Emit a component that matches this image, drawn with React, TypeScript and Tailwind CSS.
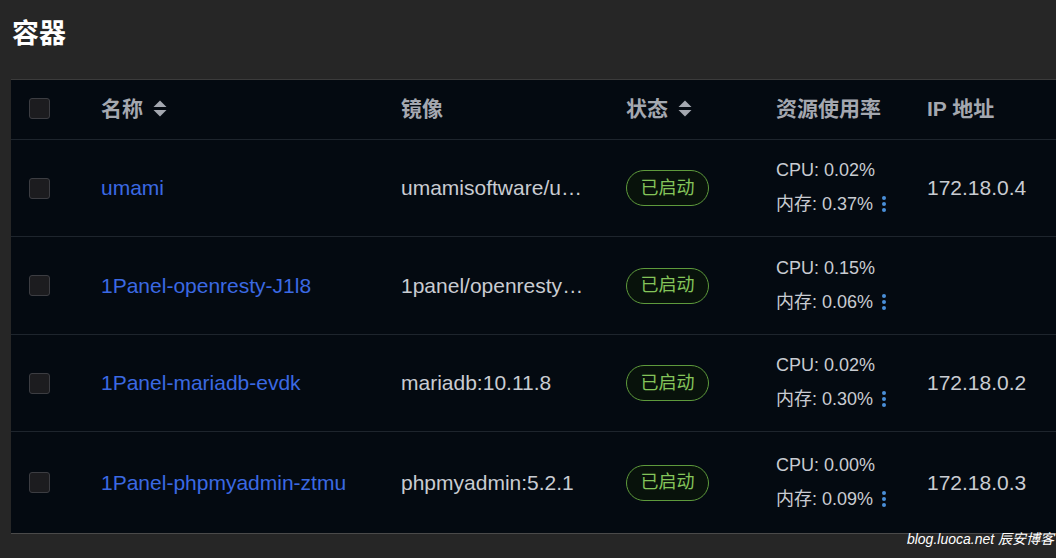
import React from 'react';

const font = '"Liberation Sans","Noto Sans CJK SC",sans-serif';

const rows = [
  { name: 'umami', image: 'umamisoftware/umami:postgresql-latest', cpu: '0.02%', mem: '0.37%', ip: '172.18.0.4', h: 'h-[97px]' },
  { name: '1Panel-openresty-J1l8', image: '1panel/openresty:1.21.4.3-3-1-focal', cpu: '0.15%', mem: '0.06%', ip: '', h: 'h-[98px]' },
  { name: '1Panel-mariadb-evdk', image: 'mariadb:10.11.8', cpu: '0.02%', mem: '0.30%', ip: '172.18.0.2', h: 'h-[97px]' },
  { name: '1Panel-phpmyadmin-ztmu', image: 'phpmyadmin:5.2.1', cpu: '0.00%', mem: '0.09%', ip: '172.18.0.3', h: 'h-[101px]' },
];

const SortIcon = () => (
  <svg width="14" height="17" viewBox="0 0 14 17" className="ml-[10px]" fill="#a4a8b0">
    <path d="M7 0.5 L13.5 7 L0.5 7 Z" />
    <path d="M0.5 10 L13.5 10 L7 16.5 Z" />
  </svg>
);

const MoreIcon = () => (
  <svg width="6" height="18" viewBox="0 0 6 18" className="ml-[8px]" fill="#4a8fd8">
    <circle cx="3" cy="3" r="2" />
    <circle cx="3" cy="9" r="2" />
    <circle cx="3" cy="15" r="2" />
  </svg>
);

const Checkbox = () => (
  <div className="w-[21px] h-[21px] rounded-[3px] border border-[#3c3d42] bg-[#1c1c1f]" />
);

export default function App() {
  return (
    <div className="relative w-[1056px] h-[558px] overflow-hidden bg-[#262626]" style={{ fontFamily: font }}>
      <div className="h-[79px] pl-[12px] pt-[16px]">
        <h1 className="text-[27px] leading-[36px] font-bold text-white">容器</h1>
      </div>

      <div className="ml-[11px] w-[1100px] bg-[#040a11] border-t border-[#3b3b3b] border-b border-b-[#4a4a4a]">
        {/* header */}
        <div className="flex items-center h-[60px] pb-[2px] border-b border-[#1e252d] text-[21px] font-bold text-[#a4a8b0]">
          <div className="w-[90px] pl-[18px] flex items-center"><Checkbox /></div>
          <div className="w-[300px] flex items-center">名称<SortIcon /></div>
          <div className="w-[225px]">镜像</div>
          <div className="w-[150px] flex items-center">状态<SortIcon /></div>
          <div className="w-[151px]">资源使用率</div>
          <div className="flex-1">IP 地址</div>
        </div>

        {rows.map((r, i) => (
          <div
            key={r.name}
            className={`flex items-center text-[21px] text-[#c9ccd2] ${r.h} ${i === rows.length - 1 ? '' : 'border-b border-[#1e252d]'}`}
          >
            <div className="w-[90px] pl-[18px] flex items-center"><Checkbox /></div>
            <div className="w-[300px] text-[#3b69e3]">{r.name}</div>
            <div className="w-[225px]">
              <div className="max-w-[185px] truncate">{r.image}</div>
            </div>
            <div className="w-[150px]">
              <div className="w-[83px] h-[36px] rounded-full border border-[#5e9a3c] bg-[#08120b] flex items-center justify-center text-[18px] text-[#84c45a]">
                已启动
              </div>
            </div>
            <div className="w-[151px] text-[18px] leading-[34px] pb-[2px]">
              <div>CPU: {r.cpu}</div>
              <div className="flex items-center">内存: {r.mem}<MoreIcon /></div>
            </div>
            <div className="flex-1">{r.ip}</div>
          </div>
        ))}
      </div>

      <div className="absolute right-[2px] bottom-[12px] text-[14px] italic text-white leading-none">
        blog.luoca.net 辰安博客
      </div>
    </div>
  );
}
